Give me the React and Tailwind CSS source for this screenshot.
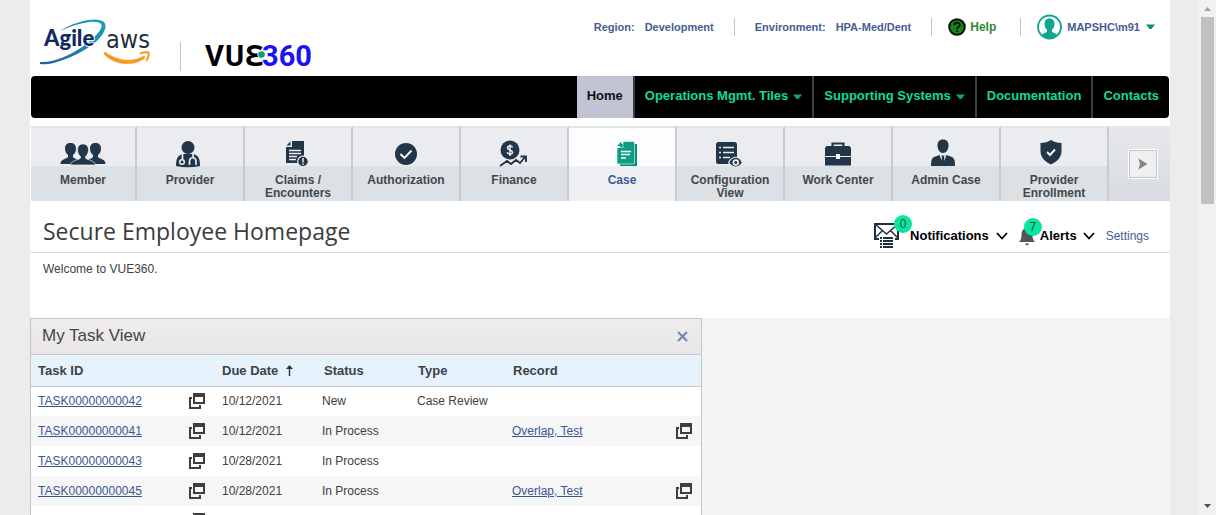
import React from 'react';

const INK = '#22364a';

function BrandLogo() {
  return (
    <svg width="112" height="48" viewBox="0 0 112 48" className="overflow-visible" role="img" aria-label="Agile aws">
      <defs>
        <linearGradient id="swoosh" x1="0" y1="1" x2="1" y2="0">
          <stop offset="0" stopColor="#2a5fa0" />
          <stop offset="1" stopColor="#12a5b5" />
        </linearGradient>
      </defs>
      <path d="M20 13C35 3 58-2 64 4c5 6-3 18-18 27C33 39 12 48 0 46v-2c12 1 29-6 42-15C55 20 64 10 61 6 56 1 38 5 20 13z" fill="url(#swoosh)" />
      <text x="4" y="28" fontFamily="Lato, sans-serif" fontWeight="900" fontSize="22" fill="#0f2a63" stroke="#ffffff" strokeWidth="2" paintOrder="stroke">Agile</text>
      <text x="66" y="30" fontFamily="'DejaVu Sans Condensed', 'Open Sans', sans-serif" fontSize="25" fill="#252f3e">aws</text>
      <path d="M65 34c12 9 27 11 39 4l1 2c-12 9-31 7-41-4z" fill="#f79a1b" stroke="#f79a1b" strokeWidth="0.600" />
      <path d="M100 35.500c3-1 6-2 8.500-1 .500 3-.500 6-2.500 8.500" fill="none" stroke="#f79a1b" strokeWidth="2" />
    </svg>
  );
}

function ProductLogo() {
  return (
    <svg width="110" height="30" viewBox="0 0 110 30" className="overflow-visible" role="img" aria-label="VUE360">
      <g fontFamily="Roboto, 'Noto Sans', sans-serif" fontWeight="700" fontSize="29">
        <text x="0" y="26" fill="#000000">V</text>
        <text x="20" y="26" fill="#000000">U</text>
        <text x="40" y="26" fill="#000000">Ɛ</text>
        <text x="57" y="26" fill="#1b12f2">360</text>
      </g>
      <circle cx="56.500" cy="14.500" r="3.800" fill="#0f9a80" stroke="#ffffff" strokeWidth="0.800" />
    </svg>
  );
}

function Caret({ className }) {
  return (
    <svg width="9" height="6" viewBox="0 0 9 6" className={className} aria-hidden="true">
      <path d="M0 .5h9L5.500 5h-2z" fill="currentColor" />
    </svg>
  );
}

function Chevron() {
  return (
    <svg width="12" height="8" viewBox="0 0 12 8" fill="none" stroke="#000000" strokeWidth="1.800" aria-hidden="true">
      <path d="M1 1l5 5.500L11 1" />
    </svg>
  );
}

function OpenIcon() {
  return (
    <svg width="16" height="16" viewBox="0 0 16 16" aria-hidden="true">
      <path d="M4 0h12v11H4zM6 4v5h8V4z" fill="#3e3e3e" fillRule="evenodd" />
      <path d="M0 4h3v2H2v8h8v-2h2v4H0z" fill="#3e3e3e" />
    </svg>
  );
}

const icons = {
  member: (
    <svg width="46" height="24" viewBox="0 0 46 24" fill={INK}>
      <path d="M5 6.500C5 3 7 1 10.500 1S16 3 16 6.500c0 3-1 5-3 6.500v2c1 2 7 2 8 7H.500c0-5 6-5 7.500-7v-2C6 11.500 5 9.500 5 6.500z" />
      <path d="M30 6.500C30 3 32 1 35.500 1S41 3 41 6.500c0 3-1 5-3 6.500v2c1.500 2 7.500 2 7.500 7H25c1-5 7-5 8-7v-2c-2-1.500-3-3.500-3-6.500z" />
      <path d="M17.500 8c0-3.500 2-6 5.500-6s5.500 2.500 5.500 6c0 3-1.300 5-3 6.500V16c1 2 9.500 2 10 7H10.500c.5-5 9-5 10-7v-1.500c-1.700-1.500-3-3.500-3-6.500z" stroke="#ebecf0" strokeWidth="0.700" />
    </svg>
  ),
  provider: (
    <svg width="30" height="28" viewBox="0 0 30 28">
      <circle cx="13" cy="7.500" r="6.500" fill={INK} />
      <path d="M1 26c0-8 2-11 7-12h10c5 1 7 4 7 12q-12 2.500-24 0z" fill={INK} />
      <path d="M7.500 14v6M18 14v3.500M14.500 25v-3.500c0-5 6.500-5 6.500 0V25" fill="none" stroke="#ebecf0" strokeWidth="1.700" />
      <circle cx="7" cy="22" r="2.300" fill="none" stroke="#ebecf0" strokeWidth="1.500" />
    </svg>
  ),
  claims: (
    <svg width="26" height="28" viewBox="0 0 26 28">
      <path d="M7 1h12v22H1V7h6z" fill={INK} />
      <path d="M1.500 5.500L5.500 1.500v4z" fill={INK} />
      <path d="M4 10.500h12M4 13.500h12M4 16.500h8M4 19.500h7" stroke="#ebecf0" strokeWidth="1.500" />
      <circle cx="18" cy="21.500" r="5.300" fill={INK} stroke="#ebecf0" strokeWidth="1.200" />
      <path d="M18 18v4.500M18 23.500v1.500" stroke="#ebecf0" strokeWidth="1.500" />
    </svg>
  ),
  authorization: (
    <svg width="24" height="24" viewBox="0 0 24 24">
      <circle cx="12" cy="12" r="11" fill={INK} />
      <path d="M6.500 12l4 4 7-7.500" fill="none" stroke="#ffffff" strokeWidth="1.900" />
    </svg>
  ),
  finance: (
    <svg width="30" height="28" viewBox="0 0 30 28">
      <circle cx="11" cy="10" r="9.500" fill={INK} />
      <path d="M13.500 7.500C13 5.500 8.500 5.500 8.500 8c0 2.300 5 1.700 5 4.200 0 2.600-4.800 2.400-5.300 0M11 4.500v11.500" fill="none" stroke="#ebecf0" strokeWidth="1.500" />
      <path d="M1 26l7-5 4 3 5-4 4 2 6-6" fill="none" stroke="#ebecf0" strokeWidth="4" />
      <path d="M1 26l7-5 4 3 5-4 4 3 6-7M21.500 16.500H27v5.500" fill="none" stroke={INK} strokeWidth="1.900" />
    </svg>
  ),
  case: (
    <svg width="32" height="26" viewBox="-10 0 32 26">
      <path d="M4 3h17v22H4z" fill="#0a8d76" />
      <path d="M7 .5h10.500q1 0 1 1v20.500q0 1-1 1H2q-1 0-1-1V6.500h6z" fill="#0d9c84" stroke="#ffffff" strokeWidth="0.600" />
      <path d="M1 5L5.500.5V5z" fill="#0d9c84" />
      <path d="M5 10.500h10M5 13.500h9M5 17h5" stroke="#ffffff" strokeWidth="1.400" />
    </svg>
  ),
  config: (
    <svg width="30" height="28" viewBox="0 0 30 28">
      <rect x="1" y="2" width="21" height="22" rx="2.500" fill={INK} />
      <path d="M4 7.500h2M8 7.500h11M4 12.500h2M8 12.500h11M4 17.500h2M8 17.500h7" stroke="#ebecf0" strokeWidth="1.700" />
      <path d="M13.500 22.500c4-7 10.500-7 14 0-3.500 6-10 6-14 0z" fill={INK} stroke="#ebecf0" strokeWidth="1.200" />
      <circle cx="20.800" cy="22.500" r="2.400" fill={INK} stroke="#ebecf0" strokeWidth="1.700" />
    </svg>
  ),
  work: (
    <svg width="28" height="26" viewBox="0 0 28 26">
      <path d="M8.500 6V2.500h11V6" fill="none" stroke={INK} strokeWidth="2.200" />
      <path d="M2.500 5h23L27 7v8H1V7z" fill={INK} />
      <path d="M1 16h26v8.500H1z" fill={INK} />
      <rect x="12" y="13" width="4" height="5" fill="#ffffff" />
    </svg>
  ),
  admin: (
    <svg width="32" height="30" viewBox="0 0 32 30">
      <path d="M13 .5c3.800 0 5.500 2.500 5.500 6 0 4.500-2.500 7.500-5.500 7.500s-5.500-3-5.500-7.500c0-3.500 1.700-6 5.500-6z" fill={INK} />
      <path d="M1 27c0-6 1-8 3-9l5.500-2L13 25l3.500-9 5.500 2c2 1 3 3 3 9z" fill={INK} />
      <path d="M11.500 16.500h3l-.5 2 .8 5L13 26l-1.800-2.500.8-5z" fill={INK} />
    </svg>
  ),
  shield: (
    <svg width="30" height="30" viewBox="0 0 30 30">
      <path d="M12 1c3 2 6.500 3 10.500 3v8c0 6-4 10.500-10.500 13.500C5.500 22.500 1.500 18 1.500 12V4C5.500 4 9 3 12 1z" fill={INK} />
      <path d="M8 13l3 3 5-5.500" fill="none" stroke="#ffffff" strokeWidth="1.900" />
    </svg>
  ),
};

const tabs = [
  { label: 'Member', icon: icons.member },
  { label: 'Provider', icon: icons.provider },
  { label: 'Claims / Encounters', icon: icons.claims },
  { label: 'Authorization', icon: icons.authorization },
  { label: 'Finance', icon: icons.finance },
  { label: 'Case', icon: icons.case, active: true },
  { label: 'Configuration View', icon: icons.config },
  { label: 'Work Center', icon: icons.work },
  { label: 'Admin Case', icon: icons.admin },
  { label: 'Provider Enrollment', icon: icons.shield },
];

const navItems = [
  { label: 'Home', active: true },
  { label: 'Operations Mgmt. Tiles', menu: true },
  { label: 'Supporting Systems', menu: true },
  { label: 'Documentation' },
  { label: 'Contacts' },
];

const tasks = [
  { id: 'TASK00000000042', due: '10/12/2021', status: 'New', type: 'Case Review' },
  { id: 'TASK00000000041', due: '10/12/2021', status: 'In Process', record: 'Overlap, Test' },
  { id: 'TASK00000000043', due: '10/28/2021', status: 'In Process' },
  { id: 'TASK00000000045', due: '10/28/2021', status: 'In Process', record: 'Overlap, Test' },
  {},
];

function Header() {
  return (
    <header className="flex h-[76px] items-start justify-between pl-[10px] pr-[15px]">
      <div className="flex">
        <div className="pt-[18px]"><BrandLogo /></div>
        <div className="ml-7 mt-[42px] h-[29px] w-px bg-[#c4c4c8]" />
        <div className="ml-6 mt-10"><ProductLogo /></div>
      </div>
      <div className="mt-[14px] flex h-[26px] items-center text-[11px] font-bold text-[#475c93]">
        <span>Region:</span>
        <span className="ml-[10px]">Development</span>
        <span className="mx-5 h-[18px] w-px bg-[#c4c4c8]" />
        <span>Environment:</span>
        <span className="ml-[10px]">HPA-Med/Dent</span>
        <span className="ml-5 mr-4 h-[18px] w-px bg-[#c4c4c8]" />
        <a href="#help" className="flex items-center gap-1 text-[12px] text-[#2c8a35]">
          <svg width="18" height="18" viewBox="0 0 18 18" aria-hidden="true">
            <circle cx="9" cy="9" r="7.800" fill="#17831b" stroke="#061006" strokeWidth="2" />
            <path d="M6.300 7.200c0-3.500 5.500-3.500 5.500-.3 0 2-2.700 2-2.700 4M9.100 12.300v1.700" fill="none" stroke="#031003" strokeWidth="1.800" />
          </svg>
          Help
        </a>
        <span className="ml-6 mr-4 h-[18px] w-px bg-[#c4c4c8]" />
        <button type="button" className="flex items-center">
          <svg width="25" height="26" viewBox="0 0 25 26" aria-hidden="true">
            <circle cx="12.500" cy="13" r="11.500" fill="#ffffff" stroke="#12a594" strokeWidth="1.800" />
            <path d="M12.500 4.500c3.500 0 5 2.300 5 5.300 0 2.700-1 4.700-2.500 6v2c1 1.300 4 1.200 5 3.200-4 4.500-11 4.500-15 0 1-2 4-1.900 5-3.200v-2c-1.500-1.300-2.500-3.300-2.500-6 0-3 1.500-5.300 5-5.300z" fill="#12a594" />
          </svg>
          <span className="ml-[5px] mr-[6px]">MAPSHC\m91</span>
          <Caret className="text-[#0d8f7c]" />
        </button>
      </div>
    </header>
  );
}

function MainNav() {
  return (
    <nav className="mx-px flex h-[42px] justify-end overflow-hidden rounded-[4px] bg-black text-[13px] font-bold">
      {navItems.map((item) => (
        <a
          key={item.label}
          href="#nav"
          className={
            item.active
              ? 'flex items-center border-r-2 border-[#3b3f45] bg-[#c1c4d2] px-[10px] pb-[2px] text-[#101010]'
              : 'flex items-center border-r-2 border-[#3b3f45] px-[10px] pb-[2px] text-[#10dc92] last:border-r-0'
          }
        >
          {item.label}
          {item.menu && <Caret className="ml-[5px] mt-[2px] text-[#159c77]" />}
        </a>
      ))}
    </nav>
  );
}

function TabBar() {
  return (
    <div className="mt-2 flex h-[75px] pl-px">
      {tabs.map((tab) => (
        <button
          key={tab.label}
          type="button"
          className={
            tab.active
              ? 'flex w-[108px] flex-col items-center border-r-2 border-t-2 border-r-[#c9cbce] border-t-[#e3e4e7] bg-[linear-gradient(to_bottom,#fdfcff_38px,#eff0f4_38px)] text-[#41589a]'
              : 'flex w-[108px] flex-col items-center border-r-2 border-t-2 border-r-[#c9cbce] border-t-[#e3e4e7] bg-[linear-gradient(to_bottom,#ebecf0_38px,#dbe1e5_38px)] text-[#45474a] first:w-[106px]'
          }
        >
          <span className="flex h-[46px] items-center justify-center pt-[6px]">{tab.icon}</span>
          <span className="w-[84px] text-[12px] font-bold leading-[13px]">{tab.label}</span>
        </button>
      ))}
      <div className="flex flex-1 items-center justify-center bg-linear-to-b from-[#e6e8eb] to-[#d8dce0] pl-[6px]">
        <button type="button" aria-label="Next tabs" className="flex size-7 items-center justify-center border border-[#c6c6c6] bg-[#efefef] outline outline-white">
          <svg width="10" height="12" viewBox="0 0 10 12" aria-hidden="true"><path d="M.5.5L9.500 6 .5 11.500 2 6z" fill="#858585" /></svg>
        </button>
      </div>
    </div>
  );
}

function Badge({ children }) {
  return (
    <span className="absolute -right-3 -top-2 flex size-[18px] items-center justify-center rounded-full bg-[#08e6a0] text-[12px] font-normal text-[#1f4a44]">
      {children}
    </span>
  );
}

function TitleBar() {
  return (
    <div className="flex h-[52px] items-center justify-between border-b border-[#dcdadb] pl-[13px] pr-[21px]">
      <h1 className="pt-[9px] font-['Open_Sans',sans-serif] text-[23px] leading-8 text-[#3c3c3c]">Secure Employee Homepage</h1>
      <div className="flex items-center pt-[18px] text-[13px] font-bold text-black">
        <button type="button" className="flex items-center">
          <span className="relative mr-[10px]">
            <svg width="26" height="25" viewBox="0 0 26 25" fill="none" stroke="#22303c" aria-hidden="true">
              <path d="M5 16H1V1h23v15h-3" strokeWidth="2" />
              <path d="M1 1l11.500 10L24 1M1 15l7-7M24 15l-7-7" strokeWidth="1.500" />
              <path d="M6 15h2M9 15h10M6 18h2M9 18h10M6 21h2M9 21h10M6 24h2M9 24h10" strokeWidth="1.800" />
            </svg>
            <Badge>0</Badge>
          </span>
          Notifications
          <span className="ml-[7px]"><Chevron /></span>
        </button>
        <button type="button" className="ml-[11px] flex items-center">
          <span className="relative mr-[5px]">
            <svg width="16" height="20" viewBox="0 0 16 20" fill="#555555" aria-hidden="true">
              <path d="M8 2c4 0 5.500 3 5.500 7 0 3 .5 5 2.500 7H0c2-2 2.500-4 2.500-7 0-4 1.500-7 5.500-7zM6 17.500h4c0 2.300-4 2.300-4 0z" />
            </svg>
            <span className="absolute left-[5px] -top-2 flex size-[18px] items-center justify-center rounded-full bg-[#08e6a0] text-[12px] font-normal text-[#1f4a44]">7</span>
          </span>
          Alerts
          <span className="ml-[6px]"><Chevron /></span>
        </button>
        <a href="#settings" className="ml-[11px] text-[12px] font-normal text-[#475c93]">Settings</a>
      </div>
    </div>
  );
}

function TaskPanel() {
  return (
    <section className="w-[672px] max-w-full border border-[#c3c6c9] bg-white">
      <div className="flex h-9 items-center justify-between border-b border-[#c3c9cf] bg-linear-to-b from-[#eeeced] to-[#e8e6e7] pl-[11px] pr-[13px]">
        <h2 className="pb-[2px] text-[17px] text-[#454545]">My Task View</h2>
        <button type="button" aria-label="Close">
          <svg width="11" height="11" viewBox="0 0 11 11" stroke="#6f86b0" strokeWidth="2" aria-hidden="true"><path d="M1 1l9 9M10 1l-9 9" /></svg>
        </button>
      </div>
      <table className="w-full table-fixed text-left text-[12px] text-[#404040]">
        <colgroup>
          <col className="w-[150px]" />
          <col className="w-[33px]" />
          <col className="w-[100px]" />
          <col className="w-[95px]" />
          <col className="w-[95px]" />
          <col />
          <col className="w-[33px]" />
        </colgroup>
        <thead>
          <tr className="h-[31px] border-b border-[#c3c9cf] bg-[#e6f2fc] text-[13px] text-[#3c4247]">
            <th className="pl-[7px]">Task ID</th>
            <td />
            <th className="pl-2">
              <button type="button" className="flex items-center gap-2">
                Due Date
                <svg width="7" height="11" viewBox="0 0 7 11" aria-hidden="true"><path d="M3.500 2v9" stroke="#333" strokeWidth="1.400" /><path d="M0 4l3.500-4L7 4z" fill="#333" /></svg>
              </button>
            </th>
            <th className="pl-[10px]">Status</th>
            <th className="pl-[9px]">Type</th>
            <th className="pl-[9px]">Record</th>
            <td />
          </tr>
        </thead>
        <tbody>
          {tasks.map((t, i) => (
            <tr key={i} className="h-[30px] even:bg-[#f6f6f6]">
              <td className="pl-[7px]">{t.id && <a href="#task" className="text-[#3a5795] underline">{t.id}</a>}</td>
              <td className="pl-2">
                <button type="button" aria-label="Open task" className="block"><OpenIcon /></button>
              </td>
              <td className="pl-2">{t.due}</td>
              <td className="pl-2">{t.status}</td>
              <td className="pl-2">{t.type}</td>
              <td className="pl-2">{t.record && <a href="#record" className="text-[#3a5795] underline">{t.record}</a>}</td>
              <td className="pl-2">
                {t.record && <button type="button" aria-label="Open record" className="block"><OpenIcon /></button>}
              </td>
            </tr>
          ))}
        </tbody>
      </table>
    </section>
  );
}

function ScrollTrack() {
  return (
    <div aria-hidden="true" className="flex w-[17px] shrink-0 flex-col items-center bg-[#f1f1f1]">
      <svg width="17" height="17" viewBox="0 0 17 17"><path d="M5 11h7L8.500 7z" fill="#a3a3a3" /></svg>
      <div className="h-[187px] w-[13px] bg-[#c1c1c1]" />
      <svg width="17" height="17" viewBox="0 0 17 17" className="mt-auto"><path d="M5 6h7l-3.500 4z" fill="#505050" /></svg>
    </div>
  );
}

export default function App() {
  return (
    <div className="flex h-screen overflow-hidden bg-[#edebec] font-['Liberation_Sans',Arial,sans-serif]">
      <div className="min-w-0 flex-1 overflow-hidden pl-[30px] pr-[29px]">
        <main className="min-h-screen bg-[#f4f4f4]">
          <div className="bg-white">
            <Header />
            <MainNav />
            <TabBar />
            <TitleBar />
            <p className="h-[65px] pl-[13px] pt-2 text-[12px] leading-4 text-[#404040]">Welcome to VUE360.</p>
          </div>
          <TaskPanel />
        </main>
      </div>
      <ScrollTrack />
    </div>
  );
}
